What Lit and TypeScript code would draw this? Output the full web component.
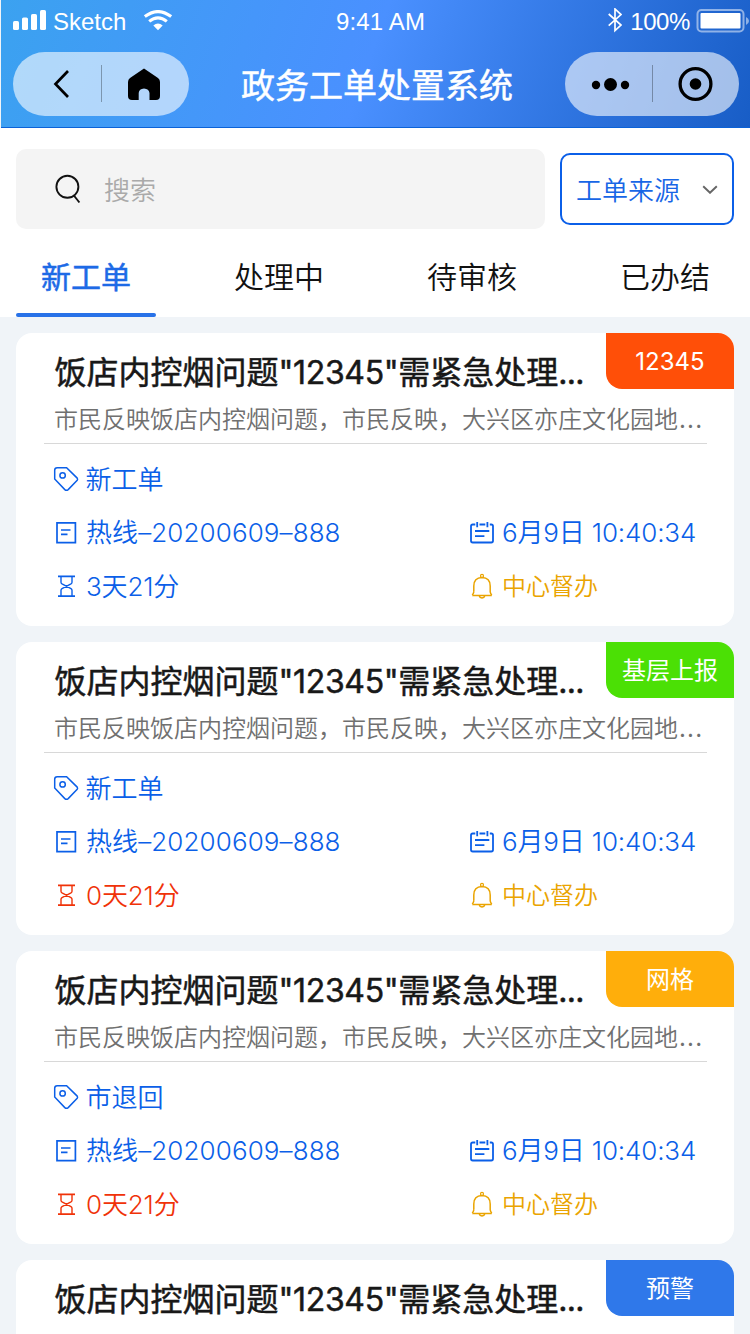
import { LitElement, html, css, svg } from "lit";
import { customElement, property } from "lit/decorators.js";
import { classMap } from "lit/directives/class-map.js";

interface Order {
  tag: string;
  tone: "red" | "green" | "amber" | "blue";
  status: string;
  remain: string;
  urgent: boolean;
}

const orders: Order[] = [
  { tag: "12345", tone: "red", status: "新工单", remain: "3天21分", urgent: false },
  { tag: "基层上报", tone: "green", status: "新工单", remain: "0天21分", urgent: true },
  { tag: "网格", tone: "amber", status: "市退回", remain: "0天21分", urgent: true },
  { tag: "预警", tone: "blue", status: "新工单", remain: "0天21分", urgent: true },
];

const glyphs = {
  tag: svg`<path d="M4.2 1.7H13.6L24.2 12.1Q25 13.2 24.2 14.3L15.2 23.6Q13.4 25 11.8 23.6L1.7 13V4.2Q1.7 1.7 4.2 1.7Z" stroke-width="1.5"/><circle cx="9.6" cy="9.4" r="2.7" stroke-width="1.5"/>`,
  doc: svg`<path d="M4 3.8H22.4V23.7H4ZM8 11H17.5M8 15.3H14.5" stroke-width="1.7"/>`,
  glass: svg`<path d="M5 3.4H22M5 23.1H22" stroke-width="1.7"/><path d="M8 3.4V9.2Q8 10.3 9 10.9L18 15.6Q19 16.2 19 17.3V23M19 3.4V9.2Q19 10.3 18 10.9L9 15.6Q8 16.2 8 17.3V23" stroke-width="1.4"/>`,
  calendar: svg`<path d="M6.3 5.5H3.7Q2 5.5 2 7.2V21.8Q2 23.5 3.7 23.5H22.3Q24 23.5 24 21.8V7.2Q24 5.5 22.3 5.5H20.8M10.5 5.5H16.3M8.2 3V8.2M18.4 3V8.2M6 12H20.3M6 17.2H15.4" stroke-width="1.8"/>`,
  bell: svg`<path d="M3.2 22.4H22.8M4.8 18.8V13Q4.8 4.6 13 4.4Q21.2 4.6 21.2 13V18.8Q21.4 20.4 22.8 22M4.8 18.8Q4.6 20.4 3.2 22M10 22.6Q10.6 24.8 13 24.9Q15.4 24.8 16 22.6" stroke-width="1.5"/><circle cx="13" cy="2.9" r="1.5" stroke-width="1.2"/>`,
};

@customElement("order-card")
class OrderCard extends LitElement {
  @property({ attribute: false }) order!: Order;

  static styles = css`
    :host { display: block; }
    .card { position: relative; height: 293px; background: #fff; border-radius: 16px; white-space: nowrap; }
    .title { box-sizing: border-box; height: 69px; padding: 16px 0 0 38.5px; font-size: 32px; line-height: 48px; font-weight: 400; -webkit-text-stroke: 0.5px #181818; color: #181818; }
    .num { letter-spacing: -0.35px; }
    .dots { letter-spacing: -0.8px; }
    .desc { box-sizing: border-box; height: 41px; padding-left: 38px; font-size: 24px; line-height: 36px; font-weight: 350; color: #707070; }
    .wide { letter-spacing: 1.2px; margin-left: 1px; font-weight: 400; }
    .rule { height: 1px; margin: 0 27px 0 28px; background: #d8d8d8; }
    .rows { display: grid; grid-template-columns: 416px 1fr; grid-template-rows: 53px 54px 54px; padding: 9px 0 0 37px; font-size: 26px; font-weight: 350; color: #0b5fe8; }
    .item { display: flex; align-items: center; height: 52px; gap: 7px; }
    .item span { margin-bottom: 4px; }
    .first { grid-column: 1 / 3; }
    .first span { margin-left: -0.5px; }
    .code { letter-spacing: 0.1px; }
    .time { letter-spacing: -0.15px; }
    .glyph { width: 26px; height: 26px; fill: none; stroke: currentColor; stroke-width: 1.7; flex: none; }
    .late { color: #f03208; }
    .warn { color: #eaa400; font-size: 24px; }
    .warn span { margin-bottom: 3px; }
    .badge { position: absolute; top: 0; right: 0; width: 128px; height: 56px; border-radius: 0 16px 0 16px; color: #fff; font-size: 24px; font-weight: 400; line-height: 58px; text-align: center; }
    .red { background: #ff4f08; }
    .green { background: #4be005; }
    .amber { background: #ffae0b; }
    .blue { background: #2f78ea; }
  `;

  glyph(name: keyof typeof glyphs) {
    return html`<svg class="glyph" viewBox="0 0 26 26">${glyphs[name]}</svg>`;
  }

  render() {
    const o = this.order;
    return html`
      <article class="card">
        <div class="title">饭店内控烟问题<span class="num">"12345"</span>需紧急处理<span class="dots">...</span></div>
        <div class="desc">市民反映饭店内控烟问题，市民反映，大兴区亦庄文化园地<span class="wide">...</span></div>
        <div class="rule"></div>
        <div class="rows">
          <div class="item first">${this.glyph("tag")}<span>${o.status}</span></div>
          <div class="item">${this.glyph("doc")}<span class="code">热线–20200609–888</span></div>
          <div class="item">${this.glyph("calendar")}<span class="time">6月9日 10:40:34</span></div>
          <div class=${classMap({ item: true, late: o.urgent })}>${this.glyph("glass")}<span class="time">${o.remain}</span></div>
          <div class="item warn">${this.glyph("bell")}<span>中心督办</span></div>
        </div>
        <div class="badge ${o.tone}">${o.tag}</div>
      </article>`;
  }
}

@customElement("app-root")
class AppRoot extends LitElement {
  static styles = css`
    :host { display: block; width: 750px; height: 1334px; overflow: hidden; background: #f0f4f8; font-family: Inter, "Noto Sans CJK SC", sans-serif; }
    .head { box-sizing: border-box; height: 128px; margin-left: 1px; border-bottom: 1px solid #0b62d8; background: linear-gradient(110deg, #3ba2f0 0%, #4a90ff 49%, #185dc6 100%); color: #fff; }
    .status { display: grid; grid-template-columns: 323px 1fr auto; align-items: center; height: 42px; padding: 0 1px 0 12px; font-family: "Liberation Sans", sans-serif; font-size: 24px; line-height: 42px; }
    .side { display: flex; align-items: center; }
    .status span { padding-top: 2px; line-height: 40px; }
    .carrier { margin-left: 7px; margin-right: 17px; }
    .clock { letter-spacing: 0.15px; }
    .percent { margin: 0 6px 0 8px; letter-spacing: -0.4px; }
    .nav { display: flex; justify-content: space-between; align-items: center; height: 64px; padding: 10px 11px 0 12px; }
    .pill { width: 176px; height: 64px; border-radius: 32px; background: rgba(255, 255, 255, 0.6); }
    .more { width: 174px; }
    .name { padding-top: 3px; font-size: 34px; font-weight: 400; -webkit-text-stroke: 0.5px #fff; line-height: 64px; }
    .top { box-sizing: border-box; height: 189px; padding: 21px 16px 0; background: #fff; }
    .find { display: flex; gap: 15px; align-items: flex-start; }
    .search { box-sizing: border-box; display: flex; align-items: center; width: 529px; height: 80px; padding-left: 38px; gap: 22px; border-radius: 10px; background: #f4f4f4; color: #aaa; font-size: 26px; font-weight: 350; }
    .search span, .source span { margin-bottom: 1px; }
    .source { box-sizing: border-box; display: flex; align-items: center; justify-content: space-between; width: 174px; height: 72px; margin-top: 4px; padding: 0 14px; border: 2px solid #0b5fe8; border-radius: 10px; color: #1766e6; font-size: 26px; font-weight: 350; }
    .tabs { display: flex; justify-content: space-between; height: 88px; margin-right: -1px; }
    .tab { box-sizing: border-box; width: 140px; height: 88px; border-bottom: 4px solid transparent; font-size: 30px; line-height: 96px; text-align: center; font-weight: 350; color: #111; }
    .active { position: relative; color: #1d6ae6; font-weight: 400; -webkit-text-stroke: 0.5px #1d6ae6; }
    .active::after { content: ""; position: absolute; left: 0; right: 0; bottom: -4px; height: 4px; border-radius: 2px; background: #2872e8; }
    .list { display: flex; flex-direction: column; gap: 16px; padding: 16px; }
  `;

  render() {
    return html`
      <header class="head">
        <div class="status">
          <div class="side">
            <svg width="33" height="22" viewBox="0 0 33 22" fill="#fff"><rect x="0" y="11" width="6" height="9" rx="1.6"/><rect x="9" y="7.5" width="6" height="12.5" rx="1.6"/><rect x="18" y="4" width="6" height="16" rx="1.6"/><rect x="27" y="0" width="6" height="20" rx="1.6"/></svg>
            <span class="carrier">Sketch</span>
            <svg width="30" height="22" viewBox="0 0 30 22"><g fill="none" stroke="#fff" stroke-width="3.1"><path d="M1.8 6.6Q15 -3.5 28.2 6.6"/><path d="M6.2 11.4Q15 4.3 23.8 11.4"/></g><path d="M10.3 15.5Q15 11.7 19.7 15.5L15 20.2Z" fill="#fff"/></svg>
          </div>
          <span class="clock">9:41 AM</span>
          <div class="side">
            <svg width="14" height="26" viewBox="0 0 14 26" fill="none" stroke="#fff" stroke-width="1.7"><path d="M0.7 6L13 17L7 22.6V1L13 6.6L0.7 17.6"/></svg>
            <span class="percent">100%</span>
            <svg width="53" height="24" viewBox="0 0 53 24"><rect x="1.5" y="1" width="46" height="21.5" rx="4" fill="none" stroke="#fff" stroke-opacity=".5" stroke-width="2"/><rect x="4.5" y="4" width="40" height="15.5" rx="1" fill="#fff"/><path d="M50 8Q53 9.5 53 12Q53 14.5 50 16Z" fill="#fff" fill-opacity=".5"/></svg>
          </div>
        </div>
        <div class="nav">
          <div class="pill">
            <svg width="176" height="64" viewBox="0 0 176 64"><path d="M55 19L42.5 32L55 45" fill="none" stroke="#000" stroke-width="2.7"/><path d="M88.5 13V50" stroke="#000" stroke-opacity=".3"/><path d="M131 16.5L145 26Q147 27.5 147 30V44Q147 48 143 48H136.5V41Q136 36.8 131 36.5Q126 36.8 125.7 41V48H119Q115 48 115 44V30Q115 27.5 117 26Z"/></svg>
          </div>
          <div class="name">政务工单处置系统</div>
          <div class="pill more">
            <svg width="174" height="64" viewBox="0 0 174 64"><circle cx="31" cy="33" r="4.2"/><circle cx="45.5" cy="32.5" r="6.5"/><circle cx="60" cy="33" r="4.2"/><path d="M87.5 13V50" stroke="#000" stroke-opacity=".3"/><circle cx="130.5" cy="32" r="15.4" fill="none" stroke="#000" stroke-width="3.3"/><circle cx="130.5" cy="32" r="5.8"/></svg>
          </div>
        </div>
      </header>
      <section class="top">
        <div class="find">
          <div class="search">
            <svg width="28" height="32" viewBox="0 0 28 32" fill="none" stroke="#111" stroke-width="1.9"><circle cx="13.4" cy="13.8" r="11"/><path d="M19.5 22L25.4 29.5"/></svg>
            <span>搜索</span>
          </div>
          <div class="source">
            <span>工单来源</span>
            <svg width="16" height="10" viewBox="0 0 16 10" fill="none" stroke="#666" stroke-width="1.9"><path d="M1.2 2.2L8 8.8L14.8 2.2"/></svg>
          </div>
        </div>
        <nav class="tabs">
          ${["新工单", "处理中", "待审核", "已办结"].map((t, i) => html`<div class=${classMap({ tab: true, active: i === 0 })}>${t}</div>`)}
        </nav>
      </section>
      <main class="list">${orders.map((o) => html`<order-card .order=${o}></order-card>`)}</main>`;
  }
}
